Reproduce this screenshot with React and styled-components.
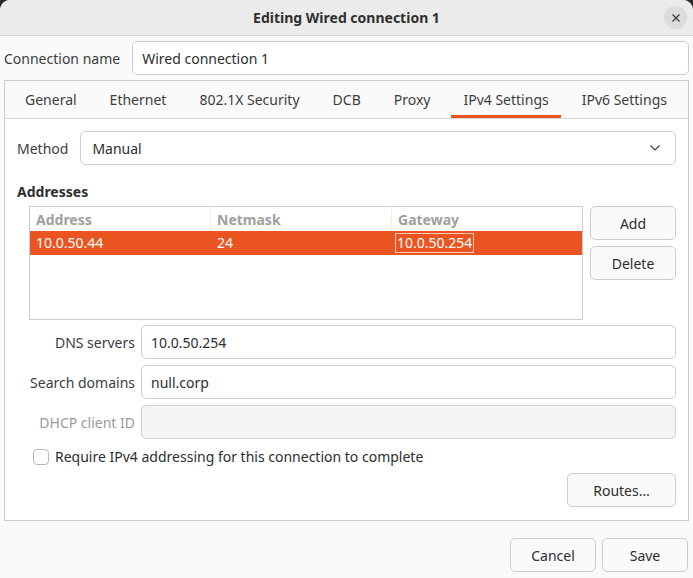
import React from 'react'
import styled, { createGlobalStyle } from 'styled-components'

const Global = createGlobalStyle`
  html, body { margin: 0; padding: 0; background: #2b2b2b; }
  body { font-family: "Noto Sans", "DejaVu Sans", sans-serif; font-size: 14px; color: #3d3d3d; }
  * { box-sizing: border-box; }
`

const Window = styled.div`
  width: 693px;
  height: 578px;
  background: #fafafa;
  border-radius: 10px 10px 0 0;
  overflow: hidden;
  display: flex;
  flex-direction: column;
`

const TitleBar = styled.div`
  height: 36px;
  flex: none;
  background: #ebebeb;
  border-bottom: 1px solid #d6d6d6;
  display: flex;
  align-items: center;
  justify-content: center;
  position: relative;
  font-weight: bold;
  font-size: 14px;
  color: #303030;
`

const CloseBtn = styled.div`
  position: absolute;
  right: 6px;
  top: 6px;
  width: 23px;
  height: 23px;
  border-radius: 50%;
  background: #dcdcdc;
  display: flex;
  align-items: center;
  justify-content: center;
`

const Body = styled.div`
  flex: 1;
  display: flex;
  flex-direction: column;
  padding: 5px 4px 0 4px;
`

const Row = styled.div`
  display: flex;
  align-items: center;
  gap: ${p => p.gap || 6}px;
`

const Label = styled.div`
  flex: none;
  width: ${p => p.w ? p.w + 'px' : 'auto'};
  text-align: ${p => p.right ? 'right' : 'left'};
  color: ${p => p.disabled ? '#9a9a9a' : '#3d3d3d'};
  white-space: nowrap;
`

const Entry = styled.div`
  flex: 1;
  height: 34px;
  border: 1px solid #cdcdcd;
  border-radius: 5px;
  background: ${p => p.disabled ? '#f5f5f5' : '#ffffff'};
  display: flex;
  align-items: center;
  padding: 0 9px;
  color: #2e2e2e;
`

const Notebook = styled.div`
  margin-top: 5px;
  border: 1px solid #cdcdcd;
  height: 441px;
  display: flex;
  flex-direction: column;
  background: #ffffff;
`

const Tabs = styled.div`
  height: 38px;
  flex: none;
  background: #fafafa;
  border-bottom: 1px solid #d6d6d6;
  display: flex;
  padding-left: 8px;
`

const Tab = styled.div`
  padding: 3px 12px 0 12px;
  margin-right: 9px;
  display: flex;
  align-items: center;
  color: #3d3d3d;
  border-bottom: 3px solid ${p => p.active ? '#e95420' : 'transparent'};
  white-space: nowrap;
`

const Page = styled.div`
  flex: 1;
  padding: 12px 12px 0 12px;
  display: flex;
  flex-direction: column;
`

const Combo = styled(Entry)`
  justify-content: space-between;
  padding-right: 14px;
  padding-left: 11px;
`

const Heading = styled.div`
  font-weight: bold;
  color: #2e2e2e;
  margin: 17px 0 5px 0;
`

const AddrRow = styled.div`
  display: flex;
  gap: 7px;
  padding-left: 12px;
`

const Table = styled.div`
  width: 554px;
  height: 114px;
  border: 1px solid #cdcdcd;
  background: #fff;
`

const THead = styled.div`
  display: grid;
  grid-template-columns: 181px 181px 1fr;
  height: 24px;
  color: #a0a0a0;
  font-weight: bold;
`

const TH = styled.div`
  padding-left: 6px;
  display: flex;
  align-items: center;
  border-right: ${p => p.last ? 'none' : '1px solid #f0f0f0'};
`

const TRow = styled.div`
  display: grid;
  grid-template-columns: 181px 181px 1fr;
  height: 24px;
  background: ${p => p.selected ? '#e95420' : 'transparent'};
  color: ${p => p.selected ? '#ffffff' : '#2e2e2e'};
`

const TD = styled.div`
  display: flex;
  align-items: center;
  padding-left: ${p => p.focus ? '3px' : '5px'};
  & > span {
    border: ${p => p.focus ? '1px solid rgba(255,255,255,0.7)' : 'none'};
    padding: 0 1px;
    line-height: 18px;
  }
`

const SideButtons = styled.div`
  display: flex;
  flex-direction: column;
  gap: 6px;
`

const Button = styled.div`
  width: ${p => p.w || 86}px;
  height: 34px;
  border: 1px solid #cdcdcd;
  border-radius: 5px;
  background: #fafafa;
  display: flex;
  align-items: center;
  justify-content: center;
  color: #2e2e2e;
`

const Fields = styled.div`
  display: flex;
  flex-direction: column;
  gap: 6px;
  margin-top: 5px;
`

const CheckRow = styled.label`
  display: flex;
  align-items: center;
  gap: 6px;
  margin: 8px 0 0 16px;
  color: #2e2e2e;
`

const Check = styled.span`
  width: 16px;
  height: 16px;
  border: 1px solid #b8b8b8;
  border-radius: 4px;
  background: #fff;
`

const RightAlign = styled.div`
  display: flex;
  justify-content: flex-end;
  gap: 6px;
  margin-top: ${p => p.mt || 0}px;
`

const Footer = styled(RightAlign)`
  padding: 17px 1px 0 0;
`

export default function App() {
  return (
    <Window>
      <Global />
      <TitleBar>
        Editing Wired connection 1
        <CloseBtn>
          <svg width="10" height="10" viewBox="0 0 10 10">
            <path d="M1.5 1.5 L8.5 8.5 M8.5 1.5 L1.5 8.5" stroke="#3a3a3a" strokeWidth="1.3" />
          </svg>
        </CloseBtn>
      </TitleBar>
      <Body>
        <Row gap={12}>
          <Label>Connection name</Label>
          <Entry>Wired connection 1</Entry>
        </Row>
        <Notebook>
          <Tabs>
            <Tab>General</Tab>
            <Tab>Ethernet</Tab>
            <Tab>802.1X Security</Tab>
            <Tab>DCB</Tab>
            <Tab>Proxy</Tab>
            <Tab active>IPv4 Settings</Tab>
            <Tab>IPv6 Settings</Tab>
          </Tabs>
          <Page>
            <Row gap={12}>
              <Label>Method</Label>
              <Combo>
                Manual
                <svg width="12" height="8" viewBox="0 0 12 8">
                  <path d="M1.5 1.5 L6 6 L10.5 1.5" fill="none" stroke="#3d3d3d" strokeWidth="1.2" />
                </svg>
              </Combo>
            </Row>
            <Heading>Addresses</Heading>
            <AddrRow>
              <Table>
                <THead>
                  <TH>Address</TH>
                  <TH>Netmask</TH>
                  <TH last>Gateway</TH>
                </THead>
                <TRow selected>
                  <TD><span>10.0.50.44</span></TD>
                  <TD><span>24</span></TD>
                  <TD focus><span>10.0.50.254</span></TD>
                </TRow>
              </Table>
              <SideButtons>
                <Button>Add</Button>
                <Button>Delete</Button>
              </SideButtons>
            </AddrRow>
            <Fields>
              <Row>
                <Label w={118} right>DNS servers</Label>
                <Entry>10.0.50.254</Entry>
              </Row>
              <Row>
                <Label w={118} right>Search domains</Label>
                <Entry>null.corp</Entry>
              </Row>
              <Row>
                <Label w={118} right disabled>DHCP client ID</Label>
                <Entry disabled />
              </Row>
            </Fields>
            <CheckRow>
              <Check />
              Require IPv4 addressing for this connection to complete
            </CheckRow>
            <RightAlign mt={7}>
              <Button w={109}>Routes…</Button>
            </RightAlign>
          </Page>
        </Notebook>
        <Footer>
          <Button>Cancel</Button>
          <Button>Save</Button>
        </Footer>
      </Body>
    </Window>
  )
}
